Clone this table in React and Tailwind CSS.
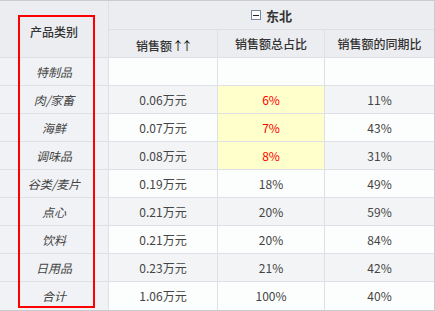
import React from 'react';

const rows = [
  { name: '特制品', amt: '', share: '', yoy: '' },
  { name: '肉/家畜', amt: '0.06万元', share: '6%', yoy: '11%', hl: true },
  { name: '海鲜', amt: '0.07万元', share: '7%', yoy: '43%', hl: true },
  { name: '调味品', amt: '0.08万元', share: '8%', yoy: '31%', hl: true },
  { name: '谷类/麦片', amt: '0.19万元', share: '18%', yoy: '49%' },
  { name: '点心', amt: '0.21万元', share: '20%', yoy: '59%' },
  { name: '饮料', amt: '0.21万元', share: '20%', yoy: '84%' },
  { name: '日用品', amt: '0.23万元', share: '21%', yoy: '42%' },
  { name: '合计', amt: '1.06万元', share: '100%', yoy: '40%' },
];

const font = { fontFamily: '"Noto Sans CJK SC", "Noto Sans", sans-serif' };

const App = () => {
  return (
    <div className="w-[435px] h-[311px] bg-white relative" style={font}>
      <div className="w-[435px] border-t border-r border-b border-[#c9cbce] grid grid-cols-[109px_109px_107px_109px] text-[12px] leading-none">
        {/* header */}
        <div className="row-span-2 bg-[#ebedf0] border-r border-b border-[#dde0e4] flex items-center justify-center text-[#333] font-medium pt-[6px]">
          产品类别
        </div>
        <div className="col-span-3 h-[29px] bg-[#ebedf0] border-b border-[#dde0e4] flex items-center justify-center gap-[5px] text-[#333]">
          <span className="w-[10px] h-[10px] border border-[#7a8aa0] bg-white flex items-center justify-center">
            <span className="w-[6px] h-[1px] bg-[#222]" />
          </span>
          <span className="font-bold text-[13px]">东北</span>
        </div>
        <div className="h-[28px] bg-[#ebedf0] border-r border-b border-[#dde0e4] flex items-center justify-center text-[#333] font-medium pt-[4px]">
          销售额<span className="text-[12px] text-black font-normal tracking-[-3px]">↑↑</span>
        </div>
        <div className="h-[28px] bg-[#ebedf0] border-r border-b border-[#dde0e4] flex items-center justify-center text-[#333] font-medium">
          销售额总占比
        </div>
        <div className="h-[28px] bg-[#ebedf0] border-b border-[#dde0e4] flex items-center justify-center text-[#333] font-medium">
          销售额的同期比
        </div>

        {rows.map((r, i) => {
          const bg = i % 2 === 1 ? 'bg-[#f2f4f6]' : 'bg-[#fcfdfd]';
          const last = i === rows.length - 1;
          const bb = last ? '' : 'border-b';
          return (
            <React.Fragment key={r.name}>
              <div className={`h-[28px] bg-[#f0f2f5] border-r ${bb} border-[#dde0e4] flex items-center justify-center italic text-[#444]`}>
                {r.name}
              </div>
              <div className={`h-[28px] ${bg} border-r ${bb} border-[#dde0e4] flex items-center justify-center text-[#444]`}>
                {r.amt}
              </div>
              <div className={`h-[28px] ${r.hl ? 'bg-[#ffffcc] text-[#ff0000]' : bg + ' text-[#444]'} border-r ${bb} border-[#dde0e4] flex items-center justify-center`}>
                {r.share}
              </div>
              <div className={`h-[28px] ${bg} ${bb} border-[#dde0e4] flex items-center justify-center text-[#444]`}>
                {r.yoy}
              </div>
            </React.Fragment>
          );
        })}
      </div>
      <div className="absolute left-[18px] top-[15px] w-[77px] h-[293px] border-2 border-[#ff0000] pointer-events-none" />
    </div>
  );
};

export default App;
